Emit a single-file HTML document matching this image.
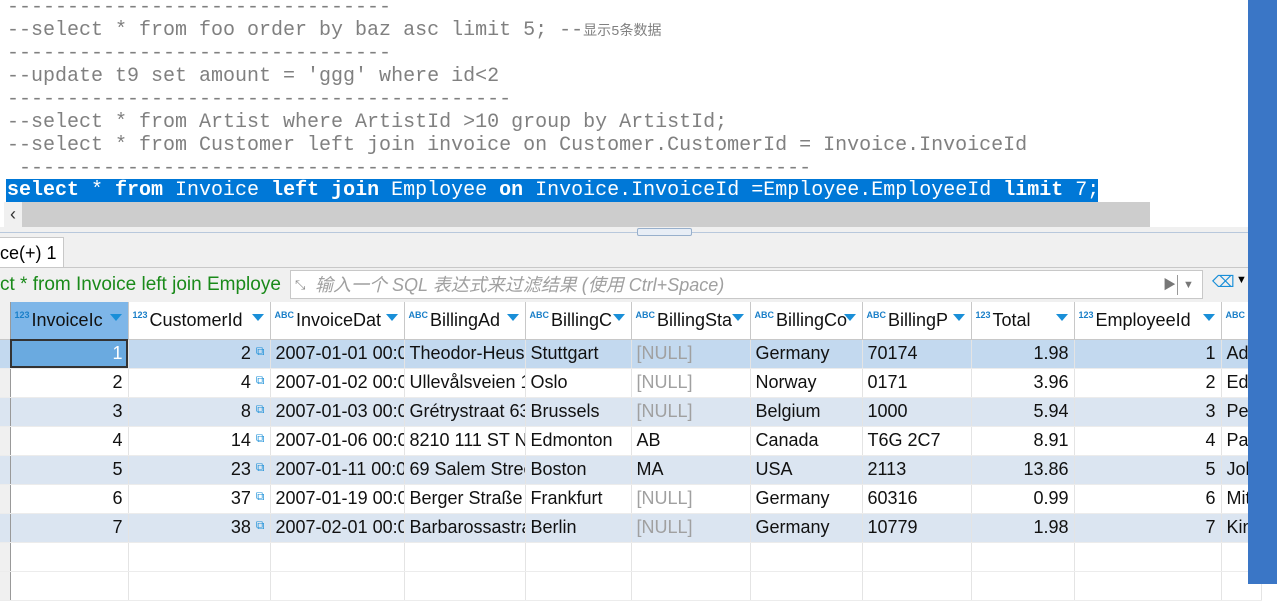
<!DOCTYPE html><html><head><meta charset="utf-8"><style>
*{margin:0;padding:0;box-sizing:border-box}
body{width:1277px;height:584px;overflow:hidden;background:#fff;position:relative;font-family:"Liberation Sans","Noto Sans CJK SC",sans-serif}
.code{position:absolute;left:7px;font-family:"Liberation Mono","Noto Sans CJK SC",monospace;font-size:20px;color:#808080;white-space:pre;line-height:23px}
.sel{position:absolute;left:6px;top:179px;width:1092px;height:23px;background:#0078d7}
b{font-weight:bold}
.blue{position:absolute;left:1248px;top:0;width:29px;height:584px;background:#3a76c6}
table{position:absolute;left:0;top:302px;width:1261px;border-collapse:collapse;table-layout:fixed;font-size:18px;color:#111}
td{height:29px;border-right:1px solid #e4e4e4;border-bottom:1px solid #ececec;padding:0 5px;white-space:nowrap;overflow:hidden}
th{height:37px;background:#fff;border-right:1px solid #c8c8c8;border-bottom:1px solid #c8c8c8;font-weight:normal;text-align:left;padding:0 22px 0 4px;white-space:nowrap;overflow:hidden;position:relative;font-size:18px}
th small{font-size:9px;color:#1a7fc8;font-weight:bold;vertical-align:8px;margin-right:2px}
th i{position:absolute;right:6px;top:12px;width:0;height:0;border-left:6px solid transparent;border-right:6px solid transparent;border-top:7px solid #1a8fd8}
.r{text-align:right}
.rn{background:#f0f0f0;border-right:1px solid #999;padding:0}
.a td{background:#dbe5f1}
.s td{background:#c3d9ef}
.nl{color:#a0a0a0}
.lk{color:#1a8fd8;font-size:12px;vertical-align:4px}
</style></head><body>
<div class="code" style="top:-4px">--------------------------------</div>
<div class="code" style="top:19px">--select * from foo order by baz asc limit 5; --<span style="font-size:14px">显示5条数据</span></div>
<div class="code" style="top:42px">--------------------------------</div>
<div class="code" style="top:65px">--update t9 set amount = 'ggg' where id&lt;2</div>
<div class="code" style="top:88px">------------------------------------------</div>
<div class="code" style="top:111px">--select * from Artist where ArtistId &gt;10 group by ArtistId;</div>
<div class="code" style="top:134px">--select * from Customer left join invoice on Customer.CustomerId = Invoice.InvoiceId</div>
<div class="code" style="top:157px"> ------------------------------------------------------------------</div>
<div class="sel"></div>
<div class="code" style="top:179px;color:#fff"><b>select</b> * <b>from</b> Invoice <b>left join</b> Employee <b>on</b> Invoice.InvoiceId =Employee.EmployeeId <b>limit</b> 7;</div>
<div style="position:absolute;left:4px;top:202px;width:1146px;height:25px;background:#cdcdcd"></div>
<div style="position:absolute;left:4px;top:202px;width:18px;height:25px;background:#f0f0f0;font-size:18px;text-align:center;line-height:25px;color:#333">‹</div>
<div style="position:absolute;left:0;top:227px;width:1248px;height:75px;background:#f0f0f0"></div>
<div style="position:absolute;left:0;top:232px;width:1248px;height:1px;background:#b8c8dc"></div>
<div style="position:absolute;left:637px;top:228px;width:55px;height:8px;border:1px solid #98b0cc;background:#e8eef6;border-radius:2px"></div>
<div style="position:absolute;left:0;top:237px;width:64px;height:30px;background:#fff;border:1px solid #c8c8c8;border-left:none;border-bottom:none;font-size:18px;line-height:30px">ce(+) 1 <span style="font-size:14px">✕</span></div>
<div style="position:absolute;left:0;top:267px;width:1248px;height:1px;background:#c8c8c8"></div>
<div style="position:absolute;left:0;top:271px;width:288px;height:28px;font-size:19px;color:#1a8a1a;line-height:28px;white-space:nowrap;overflow:hidden;z-index:2;background:#f0f0f0">ct * from Invoice left join Employe</div>
<div style="position:absolute;left:290px;top:270px;width:913px;height:29px;background:#fff;border:1px solid #c8c8c8;font-size:18px;font-style:italic;color:#a0a0a0;line-height:28px;padding-left:24px"><span style="position:absolute;left:4px;font-style:normal;color:#888;font-size:13px">⤡</span>输入一个 SQL 表达式来过滤结果 (使用 Ctrl+Space)<span style="position:absolute;left:872px;top:0;font-style:normal;color:#777;font-size:13px">▶</span><span style="position:absolute;left:886px;top:4px;width:1px;height:20px;background:#999"></span><span style="position:absolute;left:892px;top:0;font-style:normal;color:#777;font-size:11px">▼</span></div>
<div style="position:absolute;left:1212px;top:272px;font-size:16px;color:#1a8fd8">⌫</div>
<div style="position:absolute;left:1236px;top:274px;font-size:11px">▼</div>
<table>
<colgroup><col style="width:10px"><col style="width:118px"><col style="width:142px"><col style="width:134px"><col style="width:121px"><col style="width:106px"><col style="width:119px"><col style="width:112px"><col style="width:109px"><col style="width:103px"><col style="width:147px"><col style="width:40px"></colgroup>
<tr><th class="rn" style="background:#f0f0f0"></th><th style="background:#7eb6e8"><small>123</small>InvoiceIc<i></i></th><th><small>123</small>CustomerId<i></i></th><th><small>ABC</small>InvoiceDat<i></i></th><th><small>ABC</small>BillingAd<i></i></th><th><small>ABC</small>BillingC<i></i></th><th><small>ABC</small>BillingSta<i></i></th><th><small>ABC</small>BillingCo<i></i></th><th><small>ABC</small>BillingP<i></i></th><th><small>123</small>Total<i></i></th><th><small>123</small>EmployeeId<i></i></th><th style="padding:0 4px"><small>ABC</small></th></tr>
<tr class="s"><td class="rn"></td><td class="r" style="background:#6aaae0;outline:2px solid #333;outline-offset:-2px;color:#fff">1</td><td class="r">2 <span class="lk">⧉</span></td><td>2007-01-01 00:00</td><td>Theodor-Heuss</td><td>Stuttgart</td><td class="nl">[NULL]</td><td>Germany</td><td>70174</td><td class="r">1.98</td><td class="r">1</td><td>Ad</td></tr>
<tr><td class="rn"></td><td class="r">2</td><td class="r">4 <span class="lk">⧉</span></td><td>2007-01-02 00:00</td><td>Ullevålsveien 1</td><td>Oslo</td><td class="nl">[NULL]</td><td>Norway</td><td>0171</td><td class="r">3.96</td><td class="r">2</td><td>Edw</td></tr>
<tr class="a"><td class="rn"></td><td class="r">3</td><td class="r">8 <span class="lk">⧉</span></td><td>2007-01-03 00:00</td><td>Grétrystraat 63</td><td>Brussels</td><td class="nl">[NULL]</td><td>Belgium</td><td>1000</td><td class="r">5.94</td><td class="r">3</td><td>Pea</td></tr>
<tr><td class="rn"></td><td class="r">4</td><td class="r">14 <span class="lk">⧉</span></td><td>2007-01-06 00:00</td><td>8210 111 ST N</td><td>Edmonton</td><td>AB</td><td>Canada</td><td>T6G 2C7</td><td class="r">8.91</td><td class="r">4</td><td>Par</td></tr>
<tr class="a"><td class="rn"></td><td class="r">5</td><td class="r">23 <span class="lk">⧉</span></td><td>2007-01-11 00:00</td><td>69 Salem Street</td><td>Boston</td><td>MA</td><td>USA</td><td>2113</td><td class="r">13.86</td><td class="r">5</td><td>Joh</td></tr>
<tr><td class="rn"></td><td class="r">6</td><td class="r">37 <span class="lk">⧉</span></td><td>2007-01-19 00:00</td><td>Berger Straße 1</td><td>Frankfurt</td><td class="nl">[NULL]</td><td>Germany</td><td>60316</td><td class="r">0.99</td><td class="r">6</td><td>Mit</td></tr>
<tr class="a"><td class="rn"></td><td class="r">7</td><td class="r">38 <span class="lk">⧉</span></td><td>2007-02-01 00:00</td><td>Barbarossastraße</td><td>Berlin</td><td class="nl">[NULL]</td><td>Germany</td><td>10779</td><td class="r">1.98</td><td class="r">7</td><td>Kin</td></tr>
<tr><td class="rn"></td><td></td><td></td><td></td><td></td><td></td><td></td><td></td><td></td><td></td><td></td><td></td></tr>
<tr><td class="rn"></td><td></td><td></td><td></td><td></td><td></td><td></td><td></td><td></td><td></td><td></td><td></td></tr>
</table>
<div class="blue"></div>
</body></html>
